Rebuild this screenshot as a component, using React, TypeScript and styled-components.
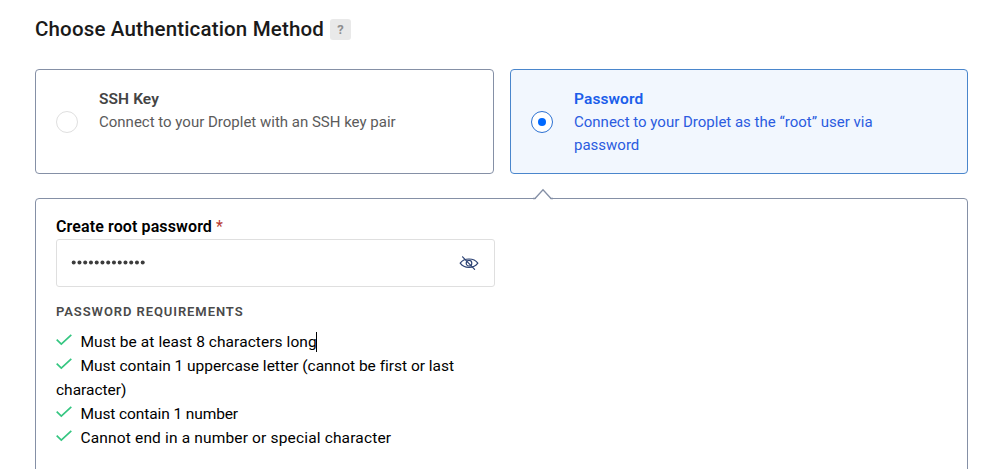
import React from 'react';
import styled, { createGlobalStyle } from 'styled-components';

const GlobalStyle = createGlobalStyle`
  * { box-sizing: border-box; }
  body {
    margin: 0;
    background: #fff;
    color: #000;
    font-family: Roboto, "Liberation Sans", sans-serif;
    font-size: 15.5px;
    overflow: hidden;
  }
`;

const Page = styled.main`
  height: 469px;
  padding: 16px 24px 0 35px;
  display: flex;
  flex-direction: column;
  overflow: hidden;
`;

const Header = styled.header`
  display: flex;
  align-items: center;
  gap: 6px;
  height: 26px;
  margin-bottom: 27px;
  flex: none;
`;

const Title = styled.h1`
  margin: 0;
  width: 289px;
  font-size: 20.5px;
  font-weight: 500;
  line-height: 26px;
  letter-spacing: 0.16px;
  white-space: nowrap;
  color: #1a1a1a;
`;

const Help = styled.button`
  width: 21px;
  height: 21px;
  padding: 0;
  margin-top: 1px;
  border: 0;
  border-radius: 3px;
  background: #e9e9e9;
  color: #8f8f8f;
  font: 700 13px/21px Roboto, sans-serif;
`;

const Methods = styled.div`
  display: grid;
  grid-template-columns: 459px 458px;
  gap: 16px;
  flex: none;
`;

const Method = styled.label<{ $selected?: boolean }>`
  display: flex;
  height: 105px;
  padding: 18px 60px 0 20px;
  border: 1px solid ${(p) => (p.$selected ? '#4a86cc' : '#8590a6')};
  border-radius: 4px;
  background: ${(p) => (p.$selected ? '#f2f7fe' : '#fff')};
  color: ${(p) => (p.$selected ? '#2b5ce0' : '#5b5b5b')};
`;

const Radio = styled.span<{ $selected?: boolean }>`
  flex: none;
  display: grid;
  place-items: center;
  width: 22px;
  height: 22px;
  margin: 23px 21px 0 0;
  border: 1px solid ${(p) => (p.$selected ? '#2c71d2' : '#dfdfdf')};
  border-radius: 50%;
  background: #fff;

  &::after {
    content: '';
    width: 8px;
    height: 8px;
    border-radius: 50%;
    background: ${(p) => (p.$selected ? '#0069ff' : 'transparent')};
  }
`;

const MethodName = styled.div<{ $selected?: boolean }>`
  font-size: 15.5px;
  font-weight: 600;
  line-height: 23px;
  letter-spacing: 0.1px;
  color: ${(p) => (p.$selected ? '#1b5eea' : '#444')};
`;

const MethodText = styled.div`
  font-size: 15px;
  line-height: 23px;
  max-width: 310px;
`;

const Panel = styled.section`
  position: relative;
  flex: none;
  height: 300px;
  margin-top: 24px;
  padding: 16px 20px;
  border: 1px solid #8590a6;
  border-radius: 4px;
`;

const Pointer = styled.svg`
  position: absolute;
  top: -12px;
  left: 497px;
  width: 20px;
  height: 13px;
`;

const Field = styled.div`
  width: 439px;
`;

const Label = styled.label`
  display: block;
  height: 24px;
  line-height: 24px;
  font-size: 16px;
  font-weight: 600;
  letter-spacing: 0.11px;
`;

const Required = styled.span`
  color: #b83a30;
  font-weight: 400;
`;

const InputBox = styled.div`
  display: flex;
  align-items: center;
  justify-content: space-between;
  height: 48px;
  padding: 0 15px 0 14px;
  border: 1px solid #dfdfdf;
  border-radius: 3px;
`;

const Dots = styled.svg`
  width: 76px;
  height: 6px;
  fill: #3c3c3c;
`;

const Eye = styled.svg`
  width: 20px;
  height: 18px;
  fill: none;
  stroke: #2d4374;
  stroke-width: 1.2;
  stroke-linecap: round;
`;

const Subheading = styled.h2`
  margin: 15px 0 8px;
  font-size: 13px;
  font-weight: 600;
  line-height: 20px;
  letter-spacing: 0.92px;
  color: #4a4a4a;
`;

const Rules = styled.ul`
  margin: 0;
  padding: 0;
  list-style: none;
`;

const Rule = styled.li<{ $spacing: number }>`
  line-height: 24px;
  font-size: 15.5px;
  letter-spacing: ${(p) => p.$spacing}px;
`;

const Check = styled.svg`
  width: 16px;
  height: 12px;
  margin-right: 8.5px;
  vertical-align: 1px;
  fill: none;
  stroke: #35c681;
  stroke-width: 1.7;
`;

const Caret = styled.span`
  display: inline-block;
  width: 1px;
  height: 20px;
  margin-left: -1px;
  vertical-align: -5px;
  background: #000;
`;

const methods = [
  { name: 'SSH Key', text: 'Connect to your Droplet with an SSH key pair', selected: false },
  { name: 'Password', text: 'Connect to your Droplet as the “root” user via password', selected: true },
];

const rules = [
  { text: 'Must be at least 8 characters long', spacing: 0.07, caret: true },
  { text: 'Must contain 1 uppercase letter (cannot be first or last character)', spacing: -0.01 },
  { text: 'Must contain 1 number', spacing: -0.1 },
  { text: 'Cannot end in a number or special character', spacing: 0.16 },
];

export default function App() {
  return (
    <Page>
      <GlobalStyle />
      <Header>
        <Title>Choose Authentication Method</Title>
        <Help>?</Help>
      </Header>
      <Methods>
        {methods.map((m) => (
          <Method key={m.name} $selected={m.selected}>
            <Radio $selected={m.selected} />
            <div>
              <MethodName $selected={m.selected}>{m.name}</MethodName>
              <MethodText>{m.text}</MethodText>
            </div>
          </Method>
        ))}
      </Methods>
      <Panel>
        <Pointer viewBox="0 0 20 13">
          <path d="M1.5 13 L10 3 L18.5 13Z" fill="#fff" />
          <path d="M0 11.5 H2 L10 2.8 L18 11.5 H20" fill="none" stroke="#8590a6" strokeWidth="1.3" />
        </Pointer>
        <Field>
          <Label>
            Create root password <Required>*</Required>
          </Label>
          <InputBox>
            <Dots viewBox="0 0 76 6">
              {Array.from({ length: 13 }, (_, i) => (
                <circle key={i} cx={2.7 + i * 5.75} cy={2.5} r={2} />
              ))}
            </Dots>
            <Eye viewBox="0 0 20 18">
              <path d="M1.2 9.2C3.2 6.3 6.3 5 10 5s6.8 1.3 8.8 4.2c-2 2.900-5.100 4.200-8.800 4.200S3.200 12.100 1.200 9.200Z" />
              <circle cx="10" cy="9.2" r="2.8" />
              <path d="M3.600 2.800 L15.600 15.400" />
            </Eye>
          </InputBox>
          <Subheading>PASSWORD REQUIREMENTS</Subheading>
          <Rules>
            {rules.map((r) => (
              <Rule key={r.text} $spacing={r.spacing}>
                <Check viewBox="0 0 16 12">
                  <path d="M0.7 5.7 L5.3 10.2 L15.3 0.9" />
                </Check>
                {r.text}
                {r.caret && <Caret />}
              </Rule>
            ))}
          </Rules>
        </Field>
      </Panel>
    </Page>
  );
}
